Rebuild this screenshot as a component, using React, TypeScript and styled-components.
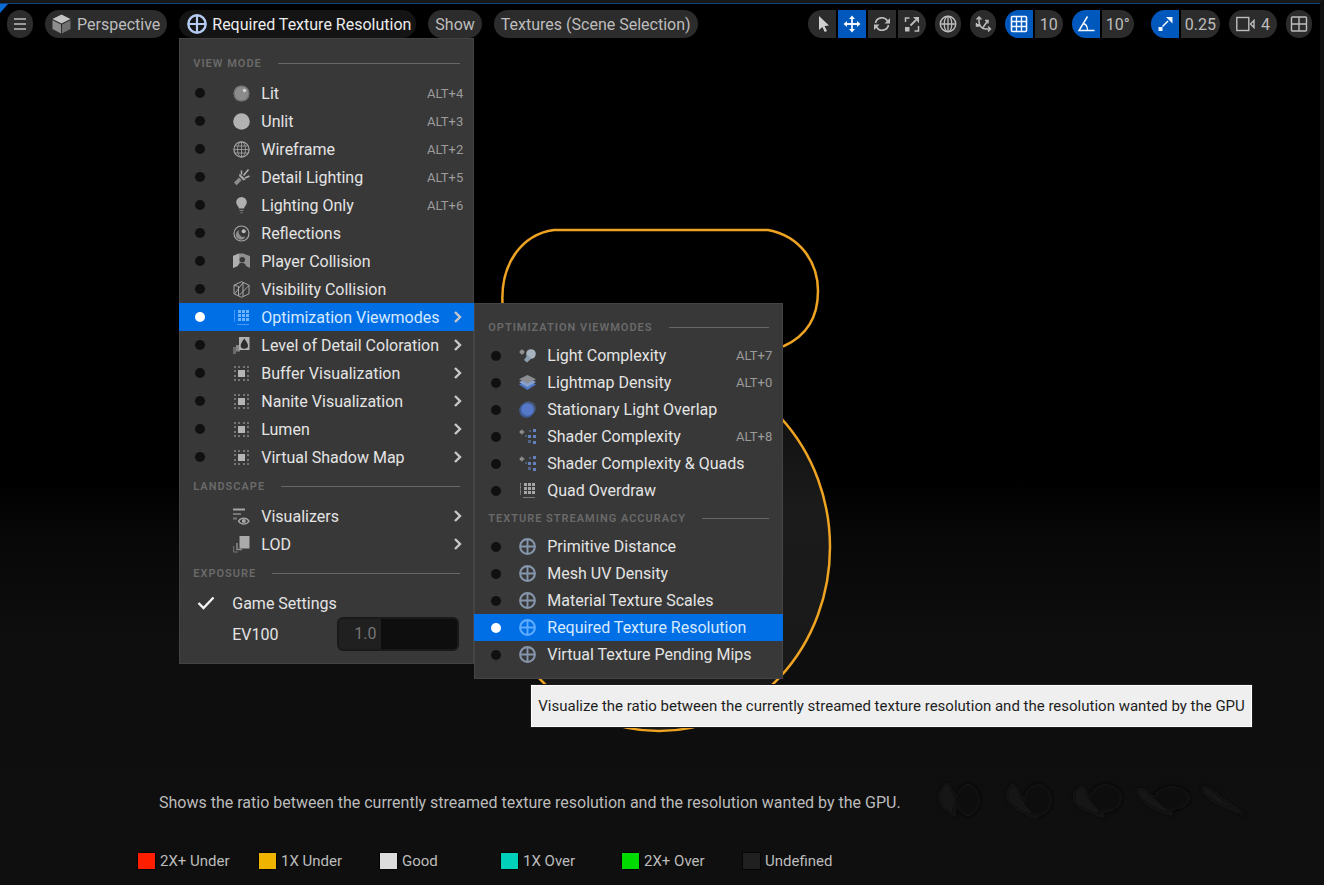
import React from "react";
import styled, { createGlobalStyle, css } from "styled-components";

const GlobalStyle = createGlobalStyle`
  *, *::before, *::after { box-sizing: border-box; }
  html, body { margin: 0; background: #000; }
  body, button, input { font-family: Roboto, "Liberation Sans", sans-serif; font-size: 16px; }
  button { border: 0; margin: 0; padding: 0; background: none; color: inherit; cursor: pointer; }
  ul { list-style: none; margin: 0; padding: 0; }
  svg { display: block; }
`;

/* ---------- page frame ---------- */

const Frame = styled.main`
  position: relative;
  display: flex;
  flex-direction: column;
  min-height: 100vh;
  overflow: hidden;
  border-top: 3px solid #181818;
  border-right: 4px solid #101010;
  background: #000;
`;

const Scene = styled.svg`
  position: absolute;
  top: -3px;
  left: 0;
  width: 100vw;
  height: 100vh;
`;

const Toolbar = styled.header`
  position: relative;
  z-index: 2;
  display: flex;
  justify-content: space-between;
  padding: 6px 8px 0 7px;
  border-top: 1px solid #12407a;
`;

const ToolGroup = styled.div<{ $gap: number }>`
  display: flex;
  gap: ${(p) => p.$gap}px;
`;

const pill = css`
  display: flex;
  align-items: center;
  height: 28px;
  background: #2c2c2c;
  color: #bdbdbd;
  white-space: nowrap;
`;

const Pill = styled.button<{ $open?: boolean }>`
  ${pill}
  gap: 6px;
  padding: 0 7px;
  border-radius: 14px;
  ${(p) =>
    p.$open &&
    css`
      padding: 0 5px 0 8px;
      gap: 5px;
      background: #141414;
      color: #ececec;
    `}
`;

const RoundButton = styled.button`
  ${pill}
  justify-content: center;
  width: 26px;
  border-radius: 13px;
`;

const Segments = styled.div<{ $apart?: boolean }>`
  display: flex;
  gap: 2px;
  height: 28px;
  border-radius: 14px;
  overflow: hidden;
  margin-left: ${(p) => (p.$apart ? 8 : 0)}px;
`;

const Segment = styled.button<{ $on?: boolean }>`
  ${pill}
  justify-content: center;
  min-width: 28px;
  padding: 0 4px;
  ${(p) =>
    p.$on &&
    css`
      background: #0058bd;
      color: #f2f6ff;
    `}
`;

/* ---------- menus ---------- */

const Anchor = styled.div`
  position: relative;
`;

const menuPanel = css`
  position: absolute;
  background: #383838;
  box-shadow: inset 0 0 0 1px #444;
  color: #e4e4e4;
`;

const Menu = styled.div`
  ${menuPanel}
  top: 28px;
  left: 0;
  width: 295px;
  padding: 10px 0 13px;
`;

const SubMenu = styled.div`
  ${menuPanel}
  top: 0;
  left: 100%;
  width: 309px;
  padding: 10px 0 11px;
`;

const SectionTitle = styled.h2<{ $tall?: boolean }>`
  display: flex;
  align-items: center;
  gap: 16px;
  height: ${(p) => (p.$tall ? 31 : 29)}px;
  margin: 0;
  padding: 0 14px;
  color: #6a6a6a;
  font-size: 11px;
  font-weight: 600;
  letter-spacing: 1px;
  white-space: nowrap;
  &::after {
    content: "";
    flex: 1;
    height: 1px;
    background: #666;
  }
`;

const Item = styled.li<{ $raised?: boolean }>`
  position: relative;
  z-index: ${(p) => (p.$raised ? 1 : 0)};
`;

const rowLayout = css<{ $sub?: boolean; $active?: boolean }>`
  display: grid;
  grid-template-columns: ${(p) => (p.$sub ? "28px" : "38px")} 28px 1fr auto;
  align-items: center;
  width: 100%;
  height: ${(p) => (p.$sub ? 27 : 28)}px;
  padding: 0 11px 0 ${(p) => (p.$sub ? 17 : 16)}px;
  color: ${(p) => (p.$active ? "#d5e9ff" : "#e4e4e4")};
  background: ${(p) => (p.$active ? "#006fe6" : "transparent")};
  text-align: left;
  white-space: nowrap;
`;

const RadioRow = styled.label<{ $sub?: boolean; $active?: boolean }>`
  ${rowLayout}
`;

const MenuButton = styled.button`
  ${rowLayout}
`;

const CheckRow = styled.label`
  ${rowLayout}
  grid-template-columns: 37px 1fr;
`;

const FieldRow = styled.div`
  display: flex;
  align-items: center;
  justify-content: space-between;
  height: 34px;
  padding: 0 15px 0 53px;
`;

const Dot = styled.input`
  appearance: none;
  width: 10px;
  height: 10px;
  margin: 0;
  border-radius: 50%;
  background: #101010;
  &:checked {
    background: #fff;
  }
`;

const Tick = styled.input`
  appearance: none;
  position: absolute;
  margin: 0;
`;

const TickCell = styled.span`
  display: flex;
  padding-left: 2px;
`;

const RowIcon = styled.span<{ $active?: boolean }>`
  color: ${(p) => (p.$active ? "#6db4ff" : "#a6a6a6")};
`;

const Shortcut = styled.kbd`
  color: #9b9b9b;
  font-family: inherit;
  font-size: 13px;
`;

const NumberField = styled.input`
  width: 122px;
  height: 34px;
  padding: 0 0 2px 15px;
  border: 2px solid #191919;
  border-radius: 6px;
  background: linear-gradient(90deg, #202020 42px, #0e0e0e 42px);
  color: #747474;
`;

const Tooltip = styled.div`
  position: absolute;
  top: 71px;
  left: 57px;
  padding: 0 6px;
  border: 1px solid #fff;
  outline: 1px solid #1c1c1c;
  background: #efefef;
  color: #1e1e1e;
  font-size: 15px;
  line-height: 40px;
  white-space: nowrap;
`;

/* ---------- legend ---------- */

const Hud = styled.footer`
  position: relative;
  margin-top: auto;
  padding: 0 0 15px 138px;
  color: #bcbcbc;
  font-size: 15px;
`;

const Description = styled.p`
  margin: 0 0 40px;
  padding-left: 21px;
  font-size: 16px;
  line-height: 18px;
`;

const Legend = styled.ul`
  display: grid;
  grid-template-columns: repeat(6, 121px);
`;

const LegendItem = styled.li`
  display: flex;
  align-items: center;
  gap: 5px;
  line-height: 18px;
`;

const Swatch = styled.span<{ $color: string }>`
  width: 17px;
  height: 16px;
  background: ${(p) => p.$color};
  box-shadow: 0 0 0 1px #050505;
`;

/* ---------- icons ---------- */

type IconProps = { children: React.ReactNode; size?: number; width?: number };

const Icon = ({ children, size = 17, width }: IconProps) => (
  <svg
    width={width ?? size}
    height={size}
    viewBox={`0 0 ${width ?? size} ${size}`}
    fill="none"
    stroke="currentColor"
    aria-hidden="true"
  >
    {children}
  </svg>
);

const CrossCircle = ({ size = 17, color }: { size?: number; color: string }) => (
  <svg width={size} height={size} viewBox="0 0 18 18" fill="none" stroke={color} strokeWidth="2.200" aria-hidden="true">
    <circle cx="9" cy="9" r="7.800" />
    <path d="M9 1v16M1 9h16" strokeWidth="2" />
  </svg>
);

const Chevron = () => (
  <Icon size={12} width={10}>
    <path d="M2 1l5 5-5 5" stroke="#c8c8c8" strokeWidth="2.400" />
  </Icon>
);

const dots = (xs: number[], ys: number[], s: number, opacity = 1) =>
  xs.flatMap((x) =>
    ys.map((y) => (
      <rect key={`${x}-${y}`} x={x} y={y} width={s} height={s} fill="currentColor" stroke="none" opacity={opacity} />
    )),
  );

const icons: Record<string, React.ReactNode> = {
  lit: (
    <Icon>
      <circle cx="8.5" cy="8.5" r="8" fill="#8b8b8b" stroke="none" />
      <circle cx="8.5" cy="8.5" r="7.2" stroke="#707070" />
      <circle cx="11.5" cy="5.5" r="1.8" fill="#d0d0d0" stroke="none" />
    </Icon>
  ),
  unlit: (
    <Icon>
      <circle cx="8.5" cy="8.5" r="8.3" fill="#b2b2b2" stroke="none" />
    </Icon>
  ),
  wireframe: (
    <Icon>
      <circle cx="8.5" cy="8.5" r="7.6" strokeWidth="1.200" />
      <ellipse cx="8.5" cy="8.5" rx="4" ry="7.6" strokeWidth=".8" />
      <path d="M8.5 1v15M1 8.5h15M2.500 5h12M2.500 12h12" strokeWidth=".8" />
    </Icon>
  ),
  torch: (
    <Icon>
      <path d="M1 13.600l5-5 2.600 2.600-5 5z" fill="#8d8d8d" stroke="none" />
      <path d="M6 7l4.400 4.400 2.400-.8L6.600 4.400z" fill="currentColor" stroke="none" />
      <path d="M8.500 5.500v-4M10.500 6.500l5-6M12 9l4.500-2" stroke="#b0b0b0" strokeWidth="1.500" />
    </Icon>
  ),
  bulb: (
    <Icon>
      <path d="M8.500 0a5.300 5.300 0 0 1 5.300 5.300c0 2.700-2.200 3.700-2.800 6.200H6c-.6-2.500-2.800-3.500-2.800-6.200A5.300 5.300 0 0 1 8.500 0z" fill="#b0b0b0" stroke="none" />
      <path d="M6.500 13.500h4M7.300 15.800h2.400" stroke="#808080" />
    </Icon>
  ),
  reflections: (
    <Icon>
      <circle cx="8.500" cy="8.500" r="7.500" strokeWidth="1.200" />
      <path d="M6 5a5 5 0 1 0 6.500 6.500A5 5 0 0 1 6 5z" fill="#8d8d8d" stroke="none" />
      <circle cx="10.700" cy="6.200" r="2" fill="#bdbdbd" stroke="none" />
    </Icon>
  ),
  player: (
    <Icon>
      <path d="M0 3L6 .500h4L17 3v12l-4-2c-.5-2-1.500-3-4-3s-3 .5-4 3l-5 2z" fill="#8f8f8f" stroke="none" />
      <path d="M0 3L6 .500v10c-.6.500-1 1.200-1.300 2.200L0 15z" fill="#b0b0b0" stroke="none" />
      <circle cx="9.300" cy="6.800" r="2.700" fill="#383838" stroke="none" />
    </Icon>
  ),
  visibility: (
    <Icon>
      <path d="M8.500.700l7.500 3.500v8.600l-7.500 3.500L1 12.800V4.200z" />
      <path d="M1.500 13L10 1.500v14M1 4.200l4.500 1.300v9M6 14.500L16 4.500" />
    </Icon>
  ),
  grid: (
    <Icon>
      {dots([5, 9, 13], [1, 5, 9], 3)}
      {dots([1], [1, 5, 9], 1, 0.6)}
      <path d="M1.500 1v12" opacity=".5" />
      <path d="M4 15.500h12" opacity=".6" />
    </Icon>
  ),
  detail: (
    <Icon>
      <path d="M0 10h3v7H0z" fill="#6a6a6a" stroke="none" />
      <path d="M3 8h4v6.500H3z" fill="#858585" stroke="none" />
      <rect x="6" y="0" width="10.500" height="13" fill="#b0b0b0" stroke="none" />
      <path d="M11.300 1.500c1 2 3.700 4.500 3.700 7a3.700 3.300 0 0 1-7.400 0c0-2.500 2.700-5 3.700-7z" fill="#2c2c2c" stroke="none" />
    </Icon>
  ),
  buffer: (
    <Icon>
      {dots([1, 5, 10, 14], [1, 14], 2, 0.55)}
      {dots([1, 14], [5, 10], 2, 0.55)}
      <rect x="5" y="5" width="7" height="7" fill="#b4b4b4" stroke="none" />
    </Icon>
  ),
  visualizers: (
    <Icon>
      <path d="M0 1.500h12" strokeWidth="2" />
      <path d="M0 6h8M0 10.500h4" stroke="#777" strokeWidth="2" />
      <path d="M5.500 13.200c2.500-4 8-4 10.500 0-2.500 3.800-8 3.800-10.500 0z" strokeWidth="1.300" />
      <circle cx="10.800" cy="13" r="2" fill="currentColor" stroke="none" />
    </Icon>
  ),
  lod: (
    <Icon>
      <path d="M.7 10v6h4" stroke="#777" />
      <path d="M4 7v6.500h5" stroke="#8a8a8a" strokeWidth="1.500" />
      <rect x="6.500" y="0" width="10" height="12.500" fill="#aaa" stroke="none" />
    </Icon>
  ),
  lightComplexity: (
    <Icon>
      <circle cx="3" cy="5" r="2" fill="#c8c8c8" stroke="none" />
      <path d="M0 5h6M3 2v6" stroke="#777" />
      <circle cx="12" cy="7" r="4.800" fill="#a7b3bf" stroke="none" />
      <path d="M8.500 8l-3.500 5 3 2.500 4.500-4z" fill="#8a9fb3" stroke="none" />
    </Icon>
  ),
  layers: (
    <Icon>
      <path d="M0 10.500L8.500 6l8.500 4.500-8.500 5.500z" fill="#4f78c4" stroke="none" />
      <path d="M0 8L8.500 4 17 8l-8.500 5z" fill="#86a0d0" stroke="none" />
      <path d="M0 5.200L8.500 1 17 5.200 8.500 9.500z" fill="#8b8d92" stroke="none" />
    </Icon>
  ),
  overlap: (
    <Icon>
      <circle cx="9.500" cy="7.500" r="7.300" fill="#48597c" stroke="none" />
      <circle cx="7.500" cy="9.500" r="7.300" fill="#3f5b96" stroke="none" />
      <circle cx="8.500" cy="8.500" r="6.200" fill="#5579c8" stroke="none" />
    </Icon>
  ),
  shader: (
    <Icon>
      <circle cx="2.800" cy="4" r="1.800" fill="#d0d0d0" stroke="none" />
      <path d="M0 4h6M2.800 1.200v5.600" stroke="#777" />
      <g stroke="none" fill="#6381bd">
        <rect x="14" y="1" width="3" height="3" />
        <rect x="14" y="7" width="3" height="3" />
        <rect x="14" y="13" width="3" height="3" />
        <rect x="9" y="7" width="3" height="3" />
        <rect x="9" y="12" width="3" height="3" opacity=".6" />
        <rect x="10" y="2" width="2" height="2" opacity=".5" />
        <rect x="6" y="7" width="2" height="2" opacity=".5" />
      </g>
    </Icon>
  ),
  cross: <CrossCircle color="#8595ab" />,
  crossActive: <CrossCircle color="#5eacff" />,
};

/* ---------- data ---------- */

type Entry = { icon: string; label: string; key?: string; more?: boolean };

const viewModes: Entry[] = [
  { icon: "lit", label: "Lit", key: "ALT+4" },
  { icon: "unlit", label: "Unlit", key: "ALT+3" },
  { icon: "wireframe", label: "Wireframe", key: "ALT+2" },
  { icon: "torch", label: "Detail Lighting", key: "ALT+5" },
  { icon: "bulb", label: "Lighting Only", key: "ALT+6" },
  { icon: "reflections", label: "Reflections" },
  { icon: "player", label: "Player Collision" },
  { icon: "visibility", label: "Visibility Collision" },
  { icon: "grid", label: "Optimization Viewmodes", more: true },
  { icon: "detail", label: "Level of Detail Coloration", more: true },
  { icon: "buffer", label: "Buffer Visualization", more: true },
  { icon: "buffer", label: "Nanite Visualization", more: true },
  { icon: "buffer", label: "Lumen", more: true },
  { icon: "buffer", label: "Virtual Shadow Map", more: true },
];

const optimizationModes: Entry[] = [
  { icon: "lightComplexity", label: "Light Complexity", key: "ALT+7" },
  { icon: "layers", label: "Lightmap Density", key: "ALT+0" },
  { icon: "overlap", label: "Stationary Light Overlap" },
  { icon: "shader", label: "Shader Complexity", key: "ALT+8" },
  { icon: "shader", label: "Shader Complexity & Quads" },
  { icon: "grid", label: "Quad Overdraw" },
];

const streamingModes: Entry[] = [
  { icon: "cross", label: "Primitive Distance" },
  { icon: "cross", label: "Mesh UV Density" },
  { icon: "cross", label: "Material Texture Scales" },
  { icon: "crossActive", label: "Required Texture Resolution" },
  { icon: "cross", label: "Virtual Texture Pending Mips" },
];

const legend = [
  ["#ff1e00", "2X+ Under"],
  ["#eeb400", "1X Under"],
  ["#dcdcdc", "Good"],
  ["#00cfba", "1X Over"],
  ["#00da00", "2X+ Over"],
  ["#202020", "Undefined"],
];

/* ---------- parts ---------- */

type RadioEntryProps = {
  entry: Entry;
  group: string;
  sub?: boolean;
  active?: boolean;
  children?: React.ReactNode;
};

const RadioEntry = ({ entry, group, sub, active, children }: RadioEntryProps) => (
  <Item $raised={active}>
    <RadioRow $sub={sub} $active={active}>
      <Dot type="radio" name={group} defaultChecked={active} />
      <RowIcon $active={active}>{icons[entry.icon]}</RowIcon>
      <span>{entry.label}</span>
      {entry.key && <Shortcut>{entry.key}</Shortcut>}
      {entry.more && <Chevron />}
    </RadioRow>
    {children}
  </Item>
);

const OptimizationMenu = () => (
  <SubMenu>
    <SectionTitle>OPTIMIZATION VIEWMODES</SectionTitle>
    <ul>
      {optimizationModes.map((e) => (
        <RadioEntry key={e.label} entry={e} group="optimization" sub />
      ))}
    </ul>
    <SectionTitle>TEXTURE STREAMING ACCURACY</SectionTitle>
    <ul>
      {streamingModes.map((e) => {
        const active = e.label === "Required Texture Resolution";
        return (
          <RadioEntry key={e.label} entry={e} group="optimization" sub active={active}>
            {active && (
              <Tooltip role="tooltip">
                Visualize the ratio between the currently streamed texture resolution and the resolution wanted by the GPU
              </Tooltip>
            )}
          </RadioEntry>
        );
      })}
    </ul>
  </SubMenu>
);

const ViewModeMenu = () => (
  <Menu>
    <SectionTitle $tall>VIEW MODE</SectionTitle>
    <ul>
      {viewModes.map((e) => {
        const active = e.label === "Optimization Viewmodes";
        return (
          <RadioEntry key={e.label} entry={e} group="view-mode" active={active}>
            {active && <OptimizationMenu />}
          </RadioEntry>
        );
      })}
    </ul>
    <SectionTitle $tall>LANDSCAPE</SectionTitle>
    {[
      ["visualizers", "Visualizers"],
      ["lod", "LOD"],
    ].map(([icon, label]) => (
      <MenuButton key={label} type="button">
        <span />
        <RowIcon>{icons[icon]}</RowIcon>
        <span>{label}</span>
        <Chevron />
      </MenuButton>
    ))}
    <SectionTitle $tall>EXPOSURE</SectionTitle>
    <CheckRow>
      <TickCell>
        <Tick type="checkbox" defaultChecked />
        <Icon size={14} width={18}>
          <path d="M1.500 7l5 5L16.500 1.500" stroke="#f4f4f4" strokeWidth="2.400" />
        </Icon>
      </TickCell>
      <span>Game Settings</span>
    </CheckRow>
    <FieldRow>
      <label htmlFor="ev100">EV100</label>
      <NumberField id="ev100" type="text" defaultValue="1.0" />
    </FieldRow>
  </Menu>
);

const Backdrop = () => (
  <Scene viewBox="0 0 1324 885" preserveAspectRatio="xMidYMid slice" aria-hidden="true">
    <defs>
      <linearGradient id="floor" x1="0" y1="0" x2="0" y2="1">
        <stop offset="0" stopColor="#000" />
        <stop offset=".15" stopColor="#080808" />
        <stop offset=".4" stopColor="#0e0e0e" />
        <stop offset="1" stopColor="#0f0f0f" />
      </linearGradient>
      <linearGradient id="ball" x1="0" y1="0" x2="0" y2="1">
        <stop offset="0" stopColor="#0c0c0c" />
        <stop offset=".4" stopColor="#1b1b1b" />
        <stop offset="1" stopColor="#181818" />
      </linearGradient>
      <filter id="soft" x="-20%" y="-60%" width="140%" height="220%">
        <feGaussianBlur stdDeviation="2" />
      </filter>
    </defs>
    <rect y="480" width="1324" height="405" fill="url(#floor)" />
    <g filter="url(#soft)">
      <g fill="#0b0b0b">
        <ellipse cx="968" cy="800" rx="12" ry="16" />
        <ellipse cx="1038" cy="800" rx="14" ry="16" />
        <ellipse cx="1106" cy="798" rx="16" ry="14" />
        <ellipse cx="1172" cy="798" rx="18" ry="12" />
      </g>
      <g fill="#181818">
        <path d="M948 782q-14 12-6 24l14 12q-4-10 0-18z" />
        <path d="M1012 784q-12 14 4 24l24 12q-18-14-22-30z" />
        <path d="M1082 786q-14 8-4 20l32 14q-22-16-24-30z" />
        <path d="M1138 788q-2 10 16 20l24 10q-24-18-32-28z" />
        <path d="M1200 786q4 12 24 20l28 12q-30-18-40-28z" />
      </g>
    </g>
    <path
      d="M503 310C498 262 524 234 554 230H768C800 236 818 262 818 291C818 319 806 336 784 346L700 360H560z"
      fill="#000"
      stroke="#eea322"
      strokeWidth="2.500"
    />
    <ellipse cx="659" cy="547" rx="171" ry="184" fill="url(#ball)" stroke="#eea322" strokeWidth="2.500" />
    <path d="M0 4h8L0 13z" fill="#0a6ad6" />
  </Scene>
);

export default function App() {
  return (
    <Frame>
      <GlobalStyle />
      <Backdrop />
      <Toolbar>
        <ToolGroup $gap={12}>
          <RoundButton type="button" aria-label="Viewport options">
            <Icon size={14}>
              <path d="M1 2h12M1 7h12M1 12h12" strokeWidth="1.500" />
            </Icon>
          </RoundButton>
          <Pill type="button">
            <Icon size={20} width={19}>
              <path d="M.5 5L9.500.500l9 4.500-9 4.500z" fill="#c4c4c4" stroke="none" />
              <path d="M.5 6.200L9 10.500v9L.5 15z" fill="#8d8d8d" stroke="none" />
              <path d="M18.500 6.200L10 10.500v9l8.500-4.500z" fill="#707070" stroke="none" />
            </Icon>
            Perspective
          </Pill>
          <Anchor>
            <Pill type="button" $open>
              <CrossCircle size={20} color="#b5cbf2" />
              Required Texture Resolution
            </Pill>
            <ViewModeMenu />
          </Anchor>
          <Pill type="button">Show</Pill>
          <Pill type="button">Textures (Scene Selection)</Pill>
        </ToolGroup>
        <ToolGroup $gap={9}>
          <Segments>
            <Segment type="button" aria-label="Select">
              <Icon size={18}>
                <path d="M6 1l10 9.500-4.500.4 2.500 5-2.300 1-2.300-5L6 15z" fill="#cfcfcf" stroke="none" />
              </Icon>
            </Segment>
            <Segment type="button" aria-label="Move" $on>
              <Icon size={18}>
                <path d="M9 3v12M3 9h12" strokeWidth="1.800" />
                <path d="M9 .5l3 3.500H6zM9 17.500l3-3.500H6zM.5 9L4 6v6zM17.500 9L14 6v6z" fill="currentColor" stroke="none" />
              </Icon>
            </Segment>
            <Segment type="button" aria-label="Rotate">
              <Icon size={18}>
                <path d="M2.500 8a6.500 6.500 0 0 1 12-2M15.500 10a6.500 6.500 0 0 1-12 2" strokeWidth="1.600" />
                <path d="M17 3v5.500h-5.500zM1 15V9.500h5.500z" fill="currentColor" stroke="none" />
              </Icon>
            </Segment>
            <Segment type="button" aria-label="Scale">
              <Icon size={18}>
                <path d="M2.500 7V3h4M15.500 11v5h-4" strokeWidth="1.500" />
                <path d="M7.500 10.500L13 5" strokeWidth="1.800" />
                <path d="M16 2v6l-6-6zM2 12h4.500v4.500H2z" fill="currentColor" stroke="none" />
              </Icon>
            </Segment>
          </Segments>
          <RoundButton type="button" aria-label="World space">
            <Icon size={18}>
              <circle cx="9" cy="9" r="7.700" strokeWidth="1.500" />
              <ellipse cx="9" cy="9" rx="3.800" ry="7.700" strokeWidth="1.300" />
              <path d="M9 1.500v15M1.500 9h15" strokeWidth="1.300" />
            </Icon>
          </RoundButton>
          <RoundButton type="button" aria-label="Surface snapping">
            <Icon size={18}>
              <path d="M5 3v3.500c0 4.500 3 7.500 7 7.500h4M5.500 9L2 10.500M9 12.500L13.500 6" strokeWidth="1.500" />
              <path d="M2.500 4.500L5 2l2.500 2.500M11 5.500h3v3M14 11.500l2.500 2.500-2.500 2.500M2.500 8v3h3" strokeWidth="1.400" />
            </Icon>
          </RoundButton>
          <Segments>
            <Segment type="button" aria-label="Grid snap" $on>
              <Icon size={18}>
                <rect x="1.500" y="1.500" width="15" height="15" rx="1" strokeWidth="1.600" />
                <path d="M6.500 1.500v15M11.500 1.500v15M1.500 6.500h15M1.500 11.500h15" strokeWidth="1.400" />
              </Icon>
            </Segment>
            <Segment type="button">10</Segment>
          </Segments>
          <Segments>
            <Segment type="button" aria-label="Angle snap" $on>
              <Icon size={18}>
                <path d="M10.500 1.500L2 15.500h15.500" strokeWidth="1.500" />
                <path d="M6 8.500c3 .5 4.500 3 4.500 7" strokeWidth="1.300" />
              </Icon>
            </Segment>
            <Segment type="button">10°</Segment>
          </Segments>
          <Segments $apart>
            <Segment type="button" aria-label="Scale snap" $on>
              <Icon size={18}>
                <path d="M6.500 11.500L12 6" strokeWidth="1.600" />
                <path d="M16.500 2v6.500L10 2zM2.500 12h4v4h-4z" fill="currentColor" stroke="none" />
              </Icon>
            </Segment>
            <Segment type="button">0.25</Segment>
          </Segments>
          <Pill type="button">
            <Icon size={16} width={19}>
              <rect x=".8" y="1.500" width="12" height="13" strokeWidth="1.400" />
              <path d="M14.500 8l3.500-3.500v7z" strokeWidth="1.400" />
            </Icon>
            4
          </Pill>
          <RoundButton type="button" aria-label="Viewport layout">
            <Icon size={18}>
              <rect x="1.500" y="2" width="15" height="14" rx="1" strokeWidth="1.400" />
              <path d="M9 2v14M1.500 9h15" strokeWidth="1.400" />
            </Icon>
          </RoundButton>
        </ToolGroup>
      </Toolbar>
      <Hud>
        <Description>
          Shows the ratio between the currently streamed texture resolution and the resolution wanted by the GPU.
        </Description>
        <Legend>
          {legend.map(([color, label]) => (
            <LegendItem key={label}>
              <Swatch $color={color} />
              {label}
            </LegendItem>
          ))}
        </Legend>
      </Hud>
    </Frame>
  );
}
